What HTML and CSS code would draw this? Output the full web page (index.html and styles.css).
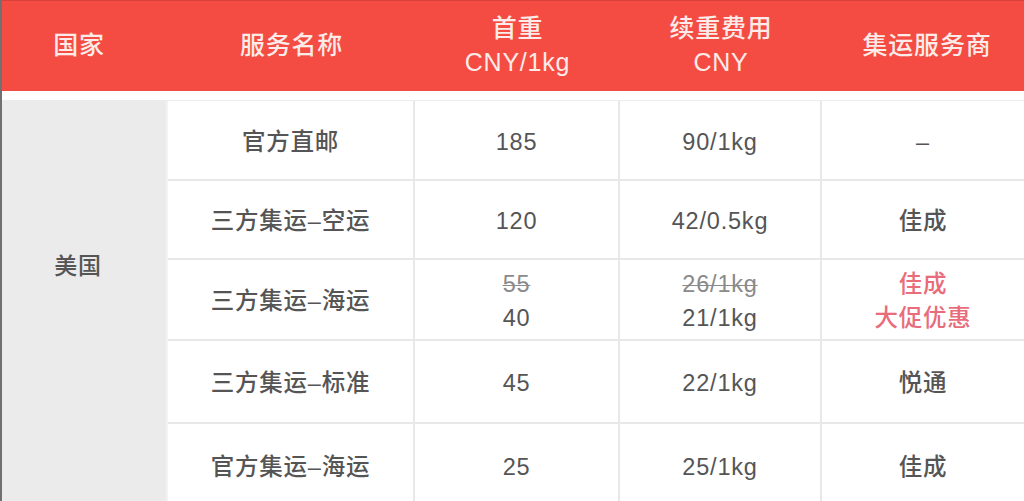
FILE: index.html
```html
<!DOCTYPE html>
<html lang="zh-CN">
<head>
<meta charset="utf-8">
<title>集运费用对比</title>
<link rel="stylesheet" href="styles.css">
</head>
<body>
<div class="page">
  <div class="head">
    <div class="hcell">国家</div>
    <div class="hcell">服务名称</div>
    <div class="hcell two"><span>首重</span><span>CNY/1kg</span></div>
    <div class="hcell two"><span>续重费用</span><span>CNY</span></div>
    <div class="hcell">集运服务商</div>
  </div>
  <div class="gap"></div>
  <div class="body">
    <div class="country">美国</div>

    <div class="cell r1">官方直邮</div>
    <div class="cell r1">185</div>
    <div class="cell r1">90/1kg</div>
    <div class="cell r1 last">–</div>

    <div class="cell r2">三方集运–空运</div>
    <div class="cell r2">120</div>
    <div class="cell r2">42/0.5kg</div>
    <div class="cell r2 last">佳成</div>

    <div class="cell r3">三方集运–海运</div>
    <div class="cell r3 two"><span class="old">55</span><span>40</span></div>
    <div class="cell r3 two"><span class="old">26/1kg</span><span>21/1kg</span></div>
    <div class="cell r3 two last promo"><span>佳成</span><span>大促优惠</span></div>

    <div class="cell r4">三方集运–标准</div>
    <div class="cell r4">45</div>
    <div class="cell r4">22/1kg</div>
    <div class="cell r4 last">悦通</div>

    <div class="cell r5">官方集运–海运</div>
    <div class="cell r5">25</div>
    <div class="cell r5">25/1kg</div>
    <div class="cell r5 last">佳成</div>
  </div>
</div>
</body>
</html>
```

FILE: styles.css
```css
html, body {
  margin: 0;
  padding: 0;
  background: #ffffff;
  overflow: hidden;
}

.page {
  width: 1024px;
  height: 501px;
  box-sizing: border-box;
  border-left: 2px solid #707070;
  font-family: "Liberation Sans", "Noto Sans CJK SC", sans-serif;
  overflow: hidden;
}

.head {
  display: grid;
  grid-template-columns: 166px 247px 205px 202px 1fr;
  height: 91px;
  background: #f44c43;
  border-top: 1px solid #d8423a;
  box-sizing: border-box;
  color: #fcebe8;
  font-size: 25px;
  font-weight: 500;
  letter-spacing: 0.8px;
}

.hcell {
  display: flex;
  flex-direction: column;
  align-items: center;
  justify-content: center;
  line-height: 41px;
  padding-bottom: 2px;
}

.hcell:first-child {
  padding-right: 12px;
}

.hcell:last-child {
  padding-left: 8px;
}

.gap {
  height: 9px;
  background: #ffffff;
}

.body {
  display: grid;
  grid-template-columns: 166px 247px 205px 202px 1fr;
  grid-template-rows: 80px 79px 81px 83px 84px;
  border-top: 1px solid #ececec;
  color: #555555;
  font-size: 23.5px;
  font-weight: 500;
  letter-spacing: 0.8px;
}

.country {
  grid-row: 1 / 6;
  grid-column: 1;
  background: #ebebeb;
  display: flex;
  justify-content: center;
  align-items: flex-start;
  padding-top: 146px;
  padding-right: 12px;
  font-size: 23px;
  border-right: 2px solid #f3f3f3;
}

.cell {
  display: flex;
  flex-direction: column;
  align-items: center;
  justify-content: center;
  border-right: 2px solid #e8e8e8;
  border-bottom: 2px solid #e8e8e8;
  line-height: 34px;
  padding-top: 3px;
}

.cell.last {
  border-right: none;
}

.two {
  line-height: 34px;
}

.old {
  color: #8a8a8a;
  text-decoration: line-through;
  text-decoration-thickness: 1px;
}

.promo {
  color: #e86c7a;
}
```
